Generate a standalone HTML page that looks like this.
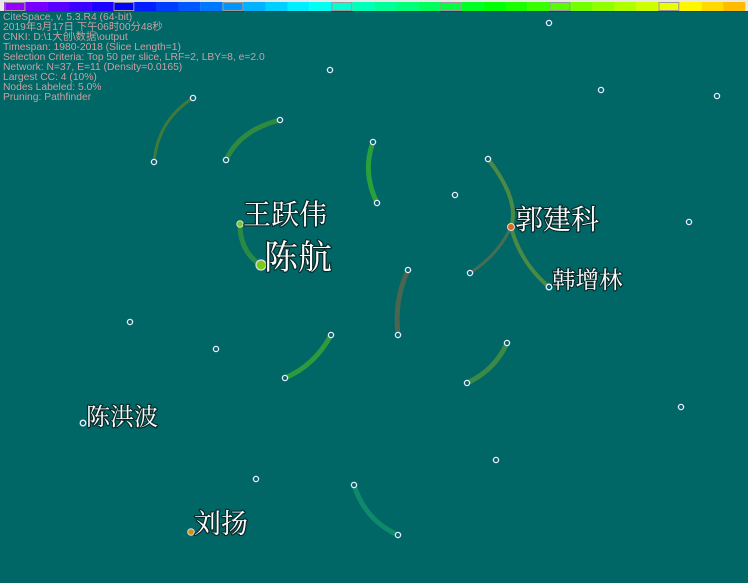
<!DOCTYPE html>
<html><head><meta charset="utf-8"><style>
html,body{margin:0;padding:0;background:#006666;width:748px;height:583px;overflow:hidden}
svg{display:block}
.info{font-family:"Liberation Sans","Noto Sans CJK SC",sans-serif;font-size:10.3px;fill:#c9a2a2}
.lab{font-family:"Liberation Serif","Noto Serif CJK SC",serif;fill:#fff;stroke:#0a2a2a;stroke-width:2.5px;paint-order:stroke;stroke-linejoin:round}
.n{fill:#006666;stroke:#eef;stroke-width:1.3}
</style></head><body>
<svg width="748" height="583" viewBox="0 0 748 583" xmlns="http://www.w3.org/2000/svg">
<rect width="748" height="583" fill="#006666"/>
<rect x="0" y="0" width="748" height="12" fill="#e8e8e8"/>
<g id="bar"></g>
<rect x="0" y="11" width="748" height="1" fill="#1a4a4a"/>
<g class="info">
<text x="3" y="20">CiteSpace, v. 5.3.R4 (64-bit)</text>
<text x="3" y="30">2019年3月17日 下午06时00分48秒</text>
<text x="3" y="40">CNKI: D:\1大创\数据\output</text>
<text x="3" y="50">Timespan: 1980-2018 (Slice Length=1)</text>
<text x="3" y="60">Selection Criteria: Top 50 per slice, LRF=2, LBY=8, e=2.0</text>
<text x="3" y="70">Network: N=37, E=11 (Density=0.0165)</text>
<text x="3" y="80">Largest CC: 4 (10%)</text>
<text x="3" y="90">Nodes Labeled: 5.0%</text>
<text x="3" y="100">Pruning: Pathfinder</text>
</g>
<g fill="none" stroke-linecap="round">
<path d="M193,98 Q158,120 154,162" stroke="#3f7a3a" stroke-width="3"/>
<path d="M280,120 Q240,130 226,160" stroke="#2e8a3e" stroke-width="5"/>
<path d="M373,142 Q362,172 377,203" stroke="#2aa03a" stroke-width="5"/>
<path d="M240,224 Q240,252 261,265" stroke="#2a8a45" stroke-width="5"/>
<path d="M488,159 Q520,200 511,227 Q520,262 549,287" stroke="#4a8a45" stroke-width="4"/>
<path d="M511,227 Q498,255 470,273" stroke="#466e55" stroke-width="3"/>
<path d="M408,270 Q394,300 398,335" stroke="#4a6550" stroke-width="5"/>
<path d="M331,335 Q315,365 285,378" stroke="#2e9a3e" stroke-width="5"/>
<path d="M507,343 Q495,370 467,383" stroke="#3a8a45" stroke-width="5"/>
<path d="M354,485 Q365,520 398,535" stroke="#0e8a6a" stroke-width="5"/>
</g>
<g class="n">
<circle cx="549" cy="23" r="2.6"/><circle cx="330" cy="70" r="2.6"/><circle cx="601" cy="90" r="2.6"/><circle cx="717" cy="96" r="2.6"/>
<circle cx="193" cy="98" r="2.6"/><circle cx="280" cy="120" r="2.6"/><circle cx="154" cy="162" r="2.6"/><circle cx="226" cy="160" r="2.6"/>
<circle cx="373" cy="142" r="2.6"/><circle cx="377" cy="203" r="2.6"/><circle cx="488" cy="159" r="2.6"/><circle cx="455" cy="195" r="2.6"/>
<circle cx="689" cy="222" r="2.6"/><circle cx="470" cy="273" r="2.6"/><circle cx="408" cy="270" r="2.6"/><circle cx="549" cy="287" r="2.8"/>
<circle cx="130" cy="322" r="2.6"/><circle cx="216" cy="349" r="2.6"/><circle cx="331" cy="335" r="2.6"/><circle cx="398" cy="335" r="2.6"/>
<circle cx="507" cy="343" r="2.6"/><circle cx="285" cy="378" r="2.6"/><circle cx="467" cy="383" r="2.6"/><circle cx="681" cy="407" r="2.6"/>
<circle cx="83" cy="423" r="2.8"/><circle cx="496" cy="460" r="2.6"/><circle cx="256" cy="479" r="2.6"/><circle cx="354" cy="485" r="2.6"/>
<circle cx="398" cy="535" r="2.6"/>
</g>
<circle cx="240" cy="224" r="3.2" fill="#7acc10" stroke="#dde" stroke-width="1"/>
<circle cx="261" cy="265" r="5" fill="#7acc10" stroke="#dde" stroke-width="1.2"/>
<circle cx="511" cy="227" r="3.5" fill="#e06a10" stroke="#dde" stroke-width="1"/>
<circle cx="191" cy="532" r="3.3" fill="#d09010" stroke="#dde" stroke-width="1"/>
<g class="lab">
<text x="243" y="224" font-size="28">王跃伟</text>
<text x="264" y="269" font-size="34">陈航</text>
<text x="515" y="229" font-size="28">郭建科</text>
<text x="552" y="288" font-size="23.5">韩增林</text>
<text x="86" y="425" font-size="24">陈洪波</text>
<text x="194" y="533" font-size="27">刘扬</text>
</g>
</svg>
<script>
(function(){var g=document.getElementById('bar'),ns='http://www.w3.org/2000/svg';
for(var i=0;i<34;i++){var r=document.createElementNS(ns,'rect');var x=4+i*21.8;
r.setAttribute('x',x);r.setAttribute('y',2);r.setAttribute('width',21.9);r.setAttribute('height',9);
r.setAttribute('fill','hsl('+(275-7*i)+',100%,50%)');g.appendChild(r);
if(i%5==0){var b=document.createElementNS(ns,'rect');b.setAttribute('x',x+1);b.setAttribute('y',2.5);b.setAttribute('width',19.8);b.setAttribute('height',8);b.setAttribute('fill','none');b.setAttribute('stroke','#999');b.setAttribute('stroke-width','1');g.appendChild(b);}}})();
</script>
</body></html>
